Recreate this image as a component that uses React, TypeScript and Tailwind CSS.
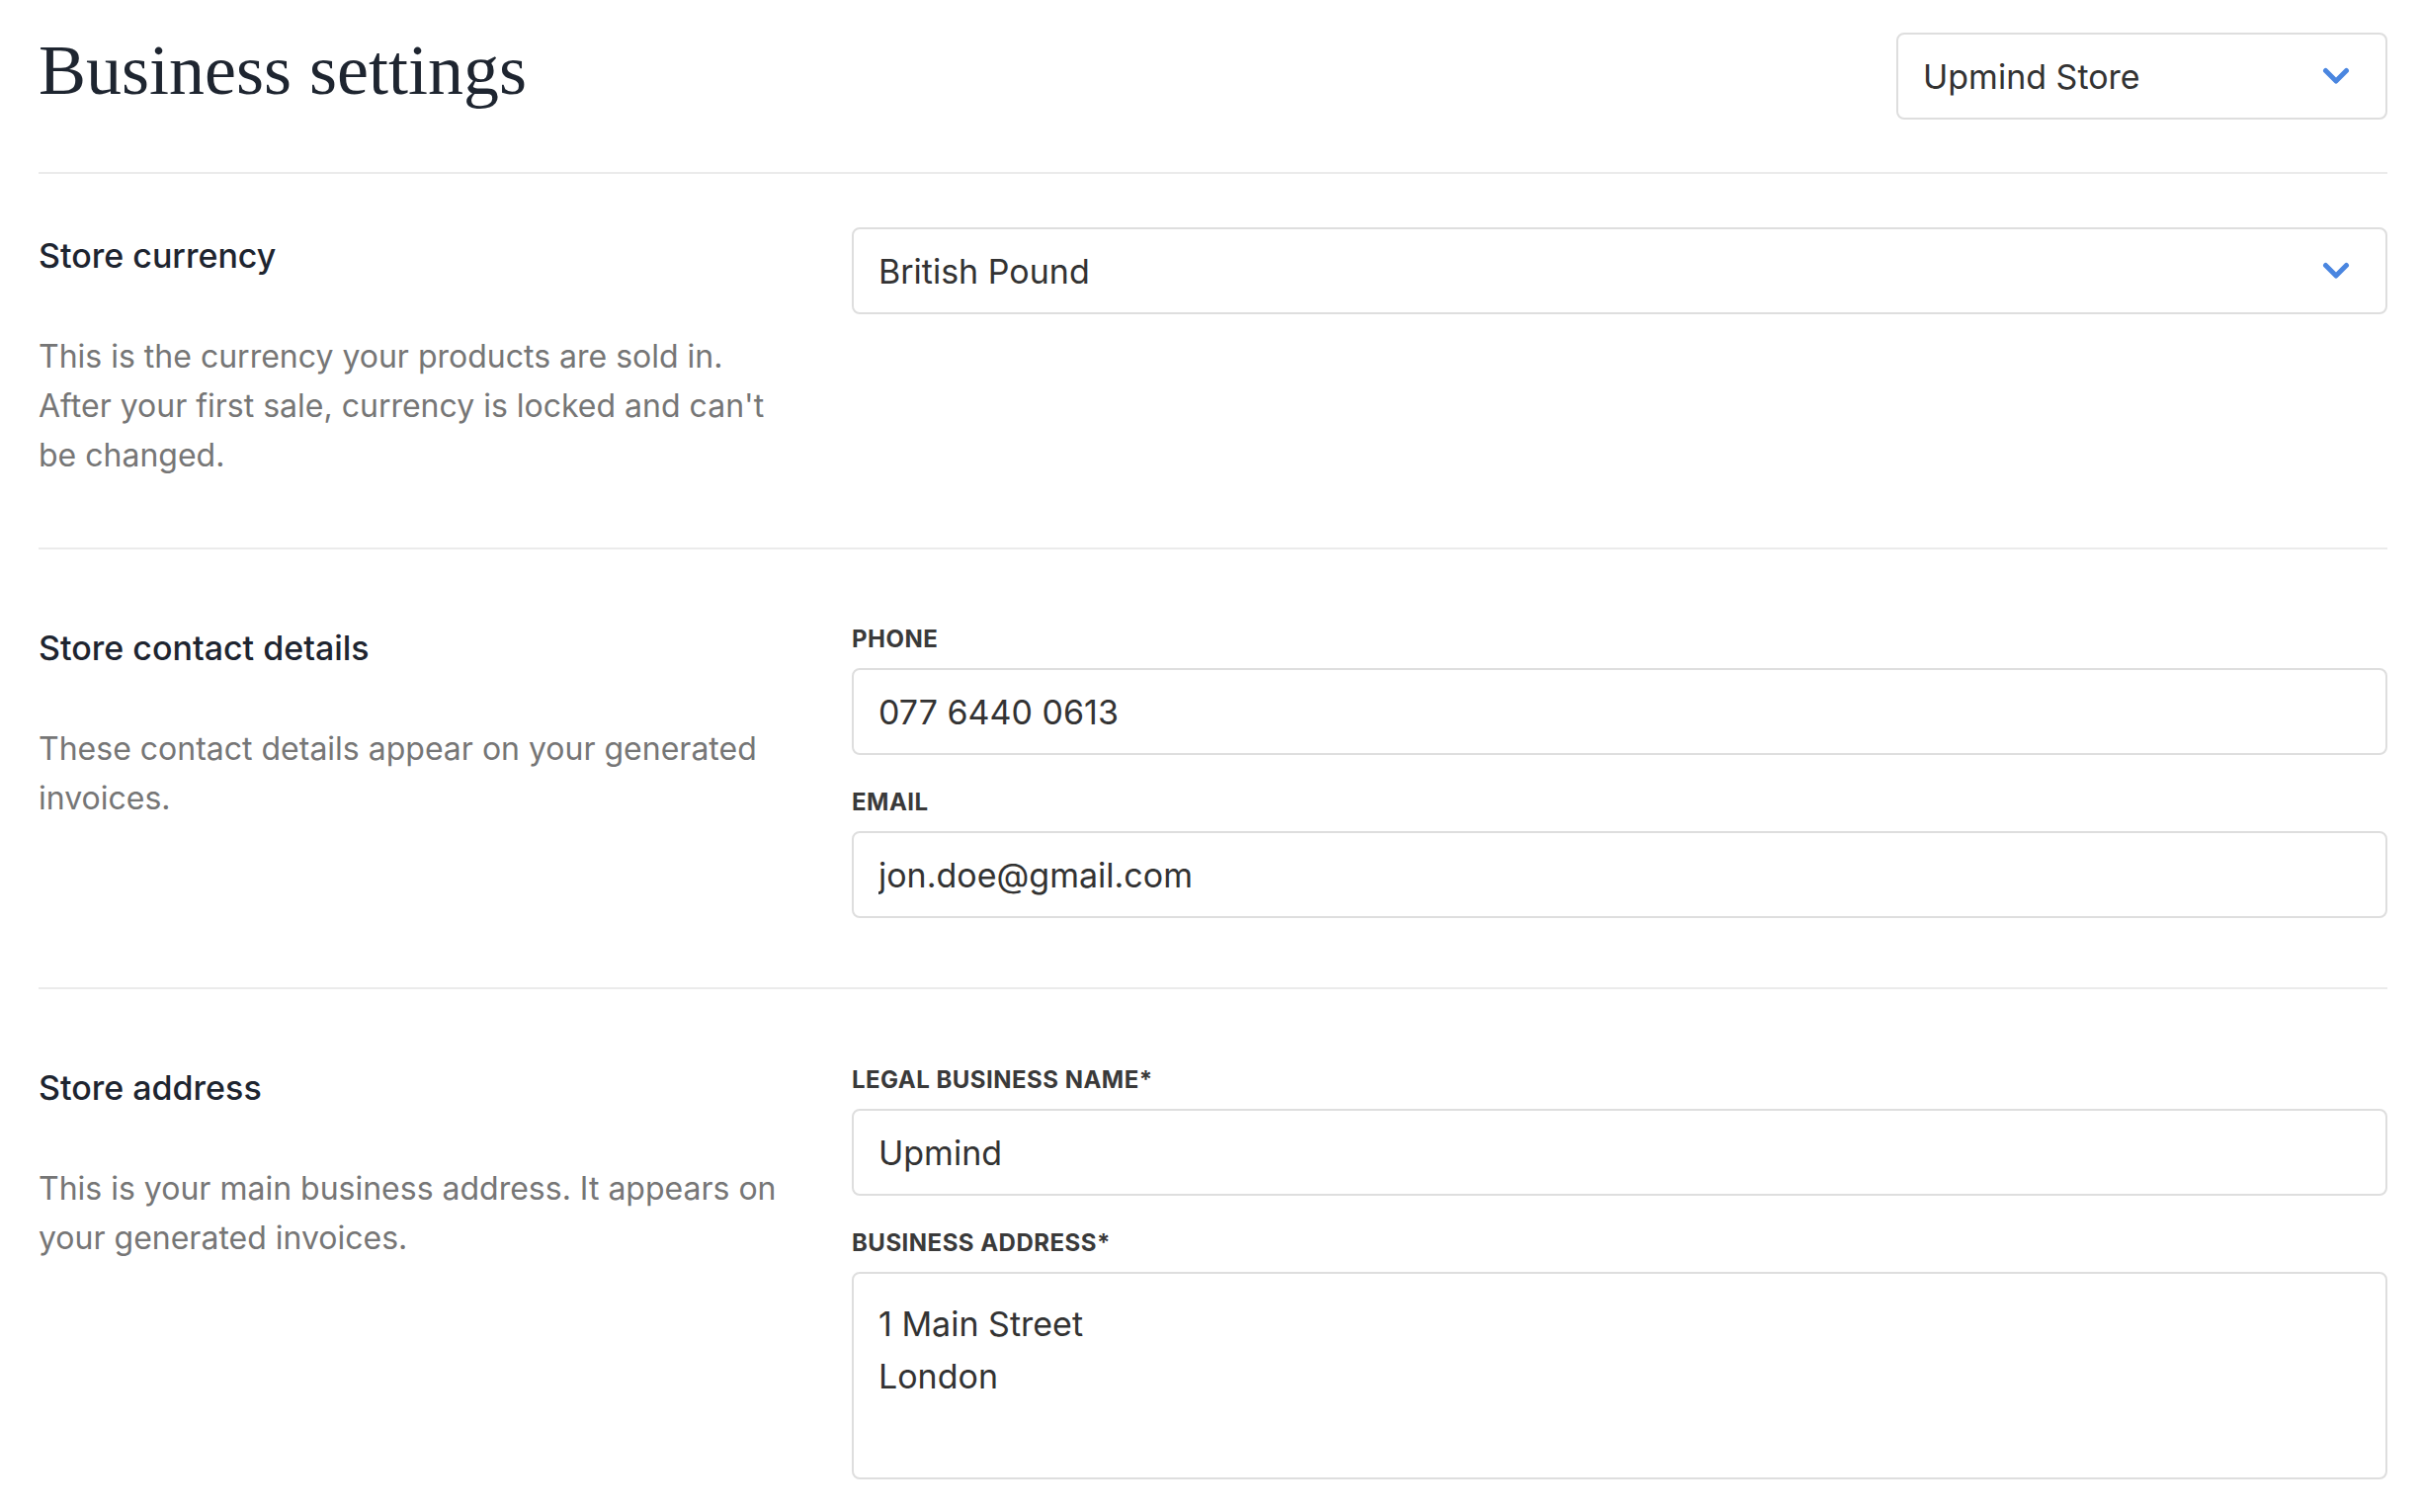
import React, { useState } from "react";

const sans = "font-['Inter','Noto_Sans',sans-serif]";

const Chevron: React.FC = () => (
  <svg width="28" height="19" viewBox="0 0 28 19" fill="none" className="shrink-0">
    <path d="M3.5 3.5 L14 14 L24.5 3.5" stroke="#4a86e0" strokeWidth="5" strokeLinecap="round" strokeLinejoin="round" />
  </svg>
);

const SelectBox: React.FC<{ value: string; className?: string }> = ({ value, className }) => (
  <button
    type="button"
    className={`flex h-[88px] items-center justify-between rounded-[8px] border-2 border-[#dedede] bg-white pl-[25px] pr-[36px] text-left text-[34px] text-[#333333] ${className ?? ""}`}
  >
    <span>{value}</span>
    <Chevron />
  </button>
);

const Label: React.FC<{ text: string }> = ({ text }) => (
  <label className="block text-[24px] font-bold leading-[28px] tracking-[0.02em] text-[#3a3a3a]">{text}</label>
);

const Field: React.FC<{ label: string; value: string; onChange: (v: string) => void; first?: boolean }> = ({ label, value, onChange, first }) => (
  <div className={first ? "" : "mt-[34px]"}>
    <Label text={label} />
    <input
      type="text"
      value={value}
      onChange={(e) => onChange(e.target.value)}
      className="mt-[15px] h-[88px] w-full rounded-[8px] border-2 border-[#dedede] bg-white px-[25px] text-[34px] text-[#333333] outline-none"
    />
  </div>
);

const SectionHead: React.FC<{ title: string; lines: string; topOffset: string }> = ({ title, lines, topOffset }) => (
  <div className={topOffset}>
    <h2 className="text-[34px] font-medium leading-[40px] text-[#1e2530]">{title}</h2>
    <p className="mt-[57px] max-w-[765px] text-[32px] leading-[50px] text-[#767676]">{lines}</p>
  </div>
);

const App: React.FC = () => {
  const [phone, setPhone] = useState("077 6440 0613");
  const [email, setEmail] = useState("jon.doe@gmail.com");
  const [legalName, setLegalName] = useState("Upmind");
  const [address, setAddress] = useState("1 Main Street\nLondon");

  return (
    <div className={`min-h-screen w-full bg-white pl-[39px] pr-[34px] ${sans}`}>
      {/* header */}
      <div className="flex items-center justify-between border-b-2 border-[#ebebeb] pb-[53px] pt-[33px]">
        <h1 className="mb-[12px] font-['Liberation_Serif','DejaVu_Serif',serif] text-[72px] leading-[75px] text-[#1e2530]">Business settings</h1>
        <SelectBox value="Upmind Store" className="w-[497px]" />
      </div>

      {/* currency */}
      <div className="grid grid-cols-[823px_1fr] border-b-2 border-[#ebebeb] pb-[68px] pt-[54px]">
        <SectionHead
          title="Store currency"
          topOffset="mt-[9px]"
          lines="This is the currency your products are sold in. After your first sale, currency is locked and can't be changed."
        />
        <div>
          <SelectBox value="British Pound" className="w-full" />
        </div>
      </div>

      {/* contact */}
      <div className="grid grid-cols-[823px_1fr] border-b-2 border-[#ebebeb] pb-[70px] pt-[77px]">
        <SectionHead title="Store contact details" topOffset="mt-[3px]" lines="These contact details appear on your generated invoices." />
        <div>
          <Field label="PHONE" value={phone} onChange={setPhone} first />
          <Field label="EMAIL" value={email} onChange={setEmail} />
        </div>
      </div>

      {/* address */}
      <div className="grid grid-cols-[823px_1fr] pt-[78px]">
        <SectionHead title="Store address" topOffset="mt-[2px]" lines="This is your main business address. It appears on your generated invoices." />
        <div>
          <Field label="LEGAL BUSINESS NAME*" value={legalName} onChange={setLegalName} first />
          <div className="mt-[34px]">
            <Label text="BUSINESS ADDRESS*" />
            <textarea
              value={address}
              onChange={(e) => setAddress(e.target.value)}
              className="mt-[15px] block h-[210px] w-full resize-none rounded-[8px] border-2 border-[#dedede] bg-white px-[25px] pt-[24px] text-[34px] leading-[53px] text-[#333333] outline-none"
            />
          </div>
        </div>
      </div>
    </div>
  );
};

export default App;
